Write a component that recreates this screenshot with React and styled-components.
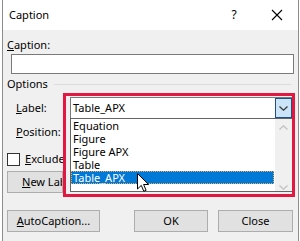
import React from "react";
import styled, { createGlobalStyle } from "styled-components";

const Global = createGlobalStyle`
  html, body { margin: 0; padding: 0; background: #ffffff; }
  body { font-family: "Noto Sans", "Open Sans", sans-serif; font-size: 11px; color: #000; }
  * { box-sizing: border-box; }
`;

const Dialog = styled.div`
  position: relative;
  margin-left: 2px;
  width: 297px;
  height: 241px;
  border-left: 1px solid #8c8c8c;
  border-right: 1px solid #8c8c8c;
  background: #f0f0f0;
  overflow: hidden;
  display: flex;
  flex-direction: column;
`;

const TitleBar = styled.div`
  height: 30px;
  flex: none;
  background: #ffffff;
  display: flex;
  align-items: center;
  padding-left: 6px;
  line-height: 30px;
`;

const TitleText = styled.div`
  flex: 1;
  font-size: 11px;
`;

const HelpGlyph = styled.div`
  width: 16px;
  font-size: 12px;
  text-align: center;
  margin-right: 29px;
`;

const CloseBox = styled.div`
  width: 12px;
  height: 30px;
  display: flex;
  align-items: center;
  margin-right: 15px;
`;

const Body = styled.div`
  flex: 1;
  padding: 8px 4px 0 4px;
  display: flex;
  flex-direction: column;
`;

const Text = styled.div`
  line-height: 14px;
  white-space: nowrap;
`;

const ClippedText = styled.div`
  line-height: 14px;
  white-space: nowrap;
  overflow: hidden;
  width: ${(p) => p.$w}px;
`;

const U = styled.span`
  text-decoration: underline;
  text-underline-offset: 1px;
`;

const Input = styled.div`
  margin: 2px 0 0 4px;
  height: 20px;
  background: #fff;
  border: 1px solid #7a7a7a;
`;

const GroupHead = styled.div`
  margin-top: 3px;
  display: flex;
  align-items: center;
  gap: 6px;
  line-height: 14px;
`;

const GroupLine = styled.div`
  flex: 1;
  height: 1px;
  margin-right: 3px;
  margin-top: 1px;
  background: #dcdcdc;
`;

const FieldRow = styled.div`
  margin-top: ${(p) => p.$top}px;
  height: 21px;
  padding-left: 9px;
  display: flex;
  align-items: center;
  line-height: 14px;
`;

const CheckRow = styled.div`
  margin-top: 10px;
  height: 14px;
  display: flex;
  align-items: center;
  gap: 5px;
  line-height: 14px;
`;

const CheckBox = styled.div`
  width: 13px;
  height: 13px;
  background: #fff;
  border: 1px solid #333;
  flex: none;
`;

const Button = styled.div`
  width: ${(p) => p.$w}px;
  height: 22px;
  background: #e1e1e1;
  border: 1px solid #adadad;
  display: flex;
  align-items: center;
  justify-content: ${(p) => (p.$left ? "flex-start" : "center")};
  padding-left: ${(p) => (p.$left ? "14px" : "0")};
  line-height: 14px;
  white-space: nowrap;
  overflow: hidden;
`;

const NewLabelRow = styled.div`
  margin-top: 5px;
  display: flex;
`;

const BottomRow = styled.div`
  margin-top: 17px;
  display: flex;
  gap: 10px;
  padding-right: 1px;
`;

const Spacer = styled.div`
  flex: 1;
`;

/* Open drop-down overlay, with red annotation frame */
const Highlight = styled.div`
  position: absolute;
  left: 60px;
  top: 93px;
  width: 232px;
  height: 104px;
  border: 3px solid #e3173f;
  padding: 1px 0 0 4px;
  display: flex;
  flex-direction: column;
  background: #f0f0f0;
`;

const ComboEdit = styled.div`
  height: 21px;
  flex: none;
  display: flex;
  background: #fff;
  border-top: 1px solid #7a7a7a;
  border-left: 1px solid #7a7a7a;
`;

const ComboText = styled.div`
  flex: 1;
  padding-left: 2px;
  display: flex;
  align-items: center;
  line-height: 14px;
`;

const DropButton = styled.div`
  width: 17px;
  background: #cce4f7;
  border: 1px solid #1e4f86;
  display: flex;
  align-items: center;
  justify-content: center;
`;

const List = styled.div`
  height: 74px;
  flex: none;
  display: flex;
  background: #fff;
  border: 1px solid #646464;
  border-right: none;
`;

const Items = styled.div`
  flex: 1;
`;

const Item = styled.div`
  height: 13px;
  line-height: 13px;
  padding-left: 2px;
  white-space: nowrap;
  ${(p) =>
    p.$sel &&
    `
    background: #0078d7;
    color: #fff;
    outline: 1px dotted #f2a94a;
    outline-offset: -1px;
    margin-right: 1px;
  `}
`;

const ScrollBar = styled.div`
  width: 17px;
  background: #f0f0f0;
  display: flex;
  flex-direction: column;
  justify-content: space-between;
  align-items: center;
  padding: 6px 0 1px;
`;

const Cursor = styled.svg`
  position: absolute;
  left: 134px;
  top: 173px;
`;

function Chevron({ up, color }) {
  return (
    <svg width="9" height="5" viewBox="0 0 9 5">
      {up ? (
        <path d="M0.5 4.5 L4.5 0.8 L8.5 4.5" fill="none" stroke={color} strokeWidth="1.3" />
      ) : (
        <path d="M0.5 0.5 L4.5 4.2 L8.5 0.5" fill="none" stroke={color} strokeWidth="1.3" />
      )}
    </svg>
  );
}

export default function App() {
  const items = ["Equation", "Figure", "Figure APX", "Table", "Table_APX"];
  return (
    <>
      <Global />
      <Dialog>
        <TitleBar>
          <TitleText>Caption</TitleText>
          <HelpGlyph>?</HelpGlyph>
          <CloseBox>
            <svg width="12" height="12" viewBox="0 0 12 12">
              <path d="M1 1 L11 11 M11 1 L1 11" stroke="#000" strokeWidth="1.1" />
            </svg>
          </CloseBox>
        </TitleBar>
        <Body>
          <Text>
            <U>C</U>aption:
          </Text>
          <Input />
          <GroupHead>
            <span>Options</span>
            <GroupLine />
          </GroupHead>
          <FieldRow $top={6}>
            <U>L</U>abel:
          </FieldRow>
          <FieldRow $top={3}>
            <U>P</U>osition:
          </FieldRow>
          <CheckRow>
            <CheckBox />
            <ClippedText $w={38}>
              <U>E</U>xclude label from caption
            </ClippedText>
          </CheckRow>
          <NewLabelRow>
            <Button $w={56} $left>
              <ClippedText $w={41}>
                <U>N</U>ew Label...
              </ClippedText>
            </Button>
          </NewLabelRow>
          <BottomRow>
            <Button $w={93}>
              <span>
                <U>A</U>utoCaption...
              </span>
            </Button>
            <Spacer />
            <Button $w={74}>OK</Button>
            <Button $w={75}>Close</Button>
          </BottomRow>
        </Body>

        <Highlight>
          <ComboEdit>
            <ComboText>Table_APX</ComboText>
            <DropButton>
              <Chevron color="#3c3c3c" />
            </DropButton>
          </ComboEdit>
          <List>
            <Items>
              {items.map((t, i) => (
                <Item key={t} $sel={i === items.length - 1}>
                  {t}
                </Item>
              ))}
            </Items>
            <ScrollBar>
              <Chevron up color="#c2c2c2" />
              <Chevron color="#c2c2c2" />
            </ScrollBar>
          </List>
        </Highlight>

        <Cursor width="13" height="20" viewBox="0 0 13 20">
          <path
            d="M0.5 0.5 L0.5 16 L4.3 12.4 L6.8 18.3 L9.1 17.3 L6.6 11.5 L11.6 11.5 Z"
            fill="#fff"
            stroke="#000"
            strokeWidth="1"
            strokeLinejoin="miter"
          />
        </Cursor>
      </Dialog>
    </>
  );
}
